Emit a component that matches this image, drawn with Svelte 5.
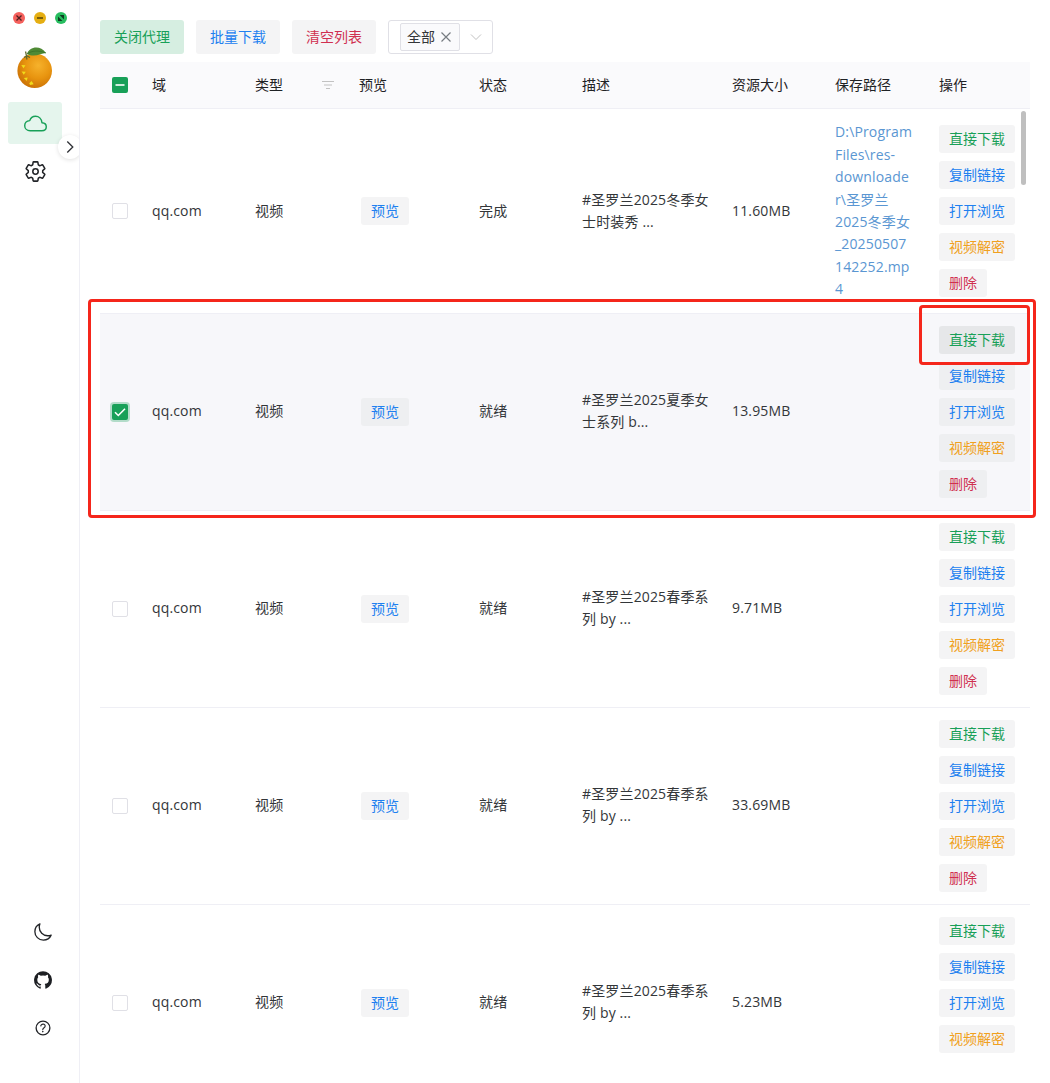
<script lang="ts">
    const actions = [
        {label: "直接下载", type: "success"},
        {label: "复制链接", type: "info"},
        {label: "打开浏览", type: "info"},
        {label: "视频解密", type: "warning"},
        {label: "删除", type: "error"},
    ];

    const columns = ["域", "类型", "预览", "状态", "描述", "资源大小", "保存路径", "操作"];

    const rows = [
        {
            domain: "qq.com", kind: "视频", status: "完成", size: "11.60MB", checked: false, actions,
            desc: ["#圣罗兰2025冬季女", "士时装秀 ..."],
            path: ["D:\\Program", "Files\\res-", "downloade", "r\\圣罗兰", "2025冬季女", "_20250507", "142252.mp", "4"],
        },
        {domain: "qq.com", kind: "视频", status: "就绪", size: "13.95MB", checked: true, actions, desc: ["#圣罗兰2025夏季女", "士系列 b..."], path: []},
        {domain: "qq.com", kind: "视频", status: "就绪", size: "9.71MB", checked: false, actions, desc: ["#圣罗兰2025春季系", "列 by ..."], path: []},
        {domain: "qq.com", kind: "视频", status: "就绪", size: "33.69MB", checked: false, actions, desc: ["#圣罗兰2025春季系", "列 by ..."], path: []},
        {domain: "qq.com", kind: "视频", status: "就绪", size: "5.23MB", checked: false, actions: actions.slice(0, 4), desc: ["#圣罗兰2025春季系", "列 by ..."], path: []},
    ];
</script>

<div class="app">
    <aside class="sidebar">
        <div class="window-btns">
            <svg viewBox="0 0 12 12"><circle cx="6" cy="6" r="6" fill="#f4605c"/><path d="M3.5 3.5l5 5M8.5 3.5l-5 5" stroke="#4b2020" stroke-width="1.3"/></svg>
            <svg viewBox="0 0 12 12"><circle cx="6" cy="6" r="6" fill="#e5ae12"/><path d="M3 6h6" stroke="#4d3b08" stroke-width="1.4"/></svg>
            <svg viewBox="0 0 12 12"><circle cx="6" cy="6" r="6" fill="#27bd5f"/><path d="M3 4.600v4.400h4.400zM4.600 3H9v4.400z" fill="#0c3e20"/></svg>
        </div>
        <svg class="logo" viewBox="0 0 36 42">
            <defs>
                <radialGradient id="peel" cx=".6" cy=".35" r=".75">
                    <stop offset="0" stop-color="#f6b22c"/>
                    <stop offset=".5" stop-color="#e8940f"/>
                    <stop offset="1" stop-color="#c46a05"/>
                </radialGradient>
            </defs>
            <circle cx="17.7" cy="23.700" r="17.3" fill="url(#peel)"/>
            <path d="M10 7c2-7 13-9.500 19-1-5 0-11 5-19 1z" fill="#4f8a35"/>
            <path d="M10 7c5-3.500 11-4 19-1" stroke="#356b25" stroke-width=".7" fill="none"/>
            <path d="M8.500 4.500c.8 2 .8 5 1.500 8M7 10.500l3-1.500 3 1.500" stroke="#5f6a2c" stroke-width="1.300" fill="none"/>
            <g fill="#f0dc1a">
                <path d="M4.300 18l4.200.2-2 3z"/>
                <path d="M4.600 24.500l4.200.2-2 3z"/>
                <path d="M6.800 31l3.900-.6-1 3.700z"/>
                <path d="M12.200 36.500l2.300-2.600 2.200 3.300-3.500.8z"/>
            </g>
        </svg>
        <nav>
            <div class="item active">
                <svg viewBox="0 0 512 512" fill="none" stroke="#18a058" stroke-width="32" stroke-linejoin="round"><path d="M400 240c-8.890-89.540-71-144-144-144-69 0-113.440 48.200-128 96-60 6-112 43.590-112 112 0 66 54 112 120 112h260c55 0 100-27.440 100-88 0-59.820-53-85.760-96-88z"/></svg>
            </div>
            <div class="item">
                <svg viewBox="0 0 512 512" fill="none" stroke="#222428" stroke-width="34" stroke-linejoin="round"><circle cx="256" cy="256" r="60"/><path d="M416.390 256a154.340 154.340 0 0 1-1.530 20.790l45.210 35.460a10.810 10.810 0 0 1 2.450 13.750l-42.770 74a10.810 10.810 0 0 1-13.140 4.590l-44.900-18.080a16.110 16.110 0 0 0-15.170 1.750A164.480 164.480 0 0 1 325 400.800a15.940 15.940 0 0 0-8.820 12.140l-6.730 47.890a11.080 11.080 0 0 1-10.680 9.170h-85.540a11.110 11.110 0 0 1-10.690-8.870l-6.720-47.820a16.070 16.070 0 0 0-9-12.220 155.300 155.300 0 0 1-21.460-12.570 16 16 0 0 0-15.110-1.710l-44.890 18.070a10.810 10.810 0 0 1-13.140-4.580l-42.770-74a10.800 10.800 0 0 1 2.450-13.750l38.210-30a16.050 16.050 0 0 0 6-14.080c-.36-4.170-.58-8.330-.58-12.500s.21-8.270.58-12.350a16 16 0 0 0-6.070-13.940l-38.190-30A10.810 10.810 0 0 1 49.480 186l42.770-74a10.810 10.810 0 0 1 13.140-4.590l44.900 18.080a16.110 16.110 0 0 0 15.170-1.750A164.480 164.480 0 0 1 187 111.200a15.940 15.940 0 0 0 8.820-12.140l6.730-47.890A11.080 11.080 0 0 1 213.230 42h85.540a11.110 11.110 0 0 1 10.690 8.870l6.720 47.820a16.070 16.070 0 0 0 9 12.220 155.300 155.300 0 0 1 21.460 12.570 16 16 0 0 0 15.110 1.710l44.890-18.070a10.810 10.810 0 0 1 13.140 4.580l42.770 74a10.800 10.800 0 0 1-2.450 13.750l-38.210 30a16.050 16.050 0 0 0-6.050 14.080c.33 4.140.55 8.300.55 12.470z"/></svg>
            </div>
        </nav>
        <div class="toggle">
            <svg viewBox="0 0 16 16" fill="none" stroke="#2f3136" stroke-width="1.3"><path d="M5.300 2.500 10.800 8l-5.500 5.500"/></svg>
        </div>
        <div class="footer">
            <svg viewBox="0 0 512 512" fill="none" stroke="#222428" stroke-width="34" stroke-linejoin="round"><path d="M160 136c0-30.620 4.510-61.610 16-88C99.570 81.270 48 159.320 48 248c0 119.290 96.710 216 216 216 88.680 0 166.730-51.570 200-128-26.390 11.490-57.380 16-88 16-119.290 0-216-96.710-216-216z"/></svg>
            <svg viewBox="0 0 20 20"><path fill="#1d1f23" d="M10 1.200a9 9 0 0 0-2.900 17.500c.500.100.600-.200.600-.400v-1.700c-2.500.500-3-1.100-3-1.100-.400-1-1-1.300-1-1.300-.800-.600.100-.600.100-.6.900.100 1.400.900 1.400.9.800 1.400 2.100 1 2.600.8.100-.6.300-1 .6-1.200-2-.2-4.100-1-4.100-4.500 0-1 .4-1.800.9-2.400-.1-.2-.4-1.100.1-2.400 0 0 .8-.2 2.500.9a8.600 8.600 0 0 1 4.500 0c1.700-1.100 2.500-.9 2.500-.9.500 1.300.2 2.200.1 2.400.6.600.9 1.400.9 2.400 0 3.500-2.100 4.200-4.100 4.500.3.300.6.800.6 1.700v2.500c0 .2.200.5.600.4A9 9 0 0 0 10 1.200z"/></svg>
            <svg viewBox="0 0 512 512" fill="none" stroke="#222428" stroke-linecap="round"><circle cx="256" cy="256" r="176" stroke-width="34"/><path stroke-width="30" d="M200 202.290s.84-17.500 19.570-32.570C230.680 160.770 244 158.180 256 158c10.930-.14 20.690 1.670 26.530 4.450 10 4.760 29.470 16.380 29.470 41.090 0 26-17 37.810-36.370 50.800S251 281.430 251 296"/><circle cx="250" cy="348" r="20" fill="#222428" stroke="none"/></svg>
        </div>
    </aside>

    <main>
        <div class="toolbar">
            <button class="btn success on">关闭代理</button>
            <button class="btn info">批量下载</button>
            <button class="btn error">清空列表</button>
            <div class="select">
                <span class="tag">全部<svg viewBox="0 0 12 12"><path d="M1.500 1.500l9 9M10.500 1.500l-9 9"/></svg></span>
                <svg class="arrow" viewBox="0 0 12 12"><path d="M1 3.500l5 5 5-5"/></svg>
            </div>
        </div>

        <div class="table">
            <div class="row head">
                <div class="cell check"><span class="box full"><svg viewBox="0 0 16 16"><path d="M3.500 8h9"/></svg></span></div>
                {#each columns as column}
                    <div class="cell">
                        {column}
                        {#if column === "类型"}
                            <svg class="filter" viewBox="0 0 12 10"><path d="M0 1.500h12M2 5h8M4 8.500h4"/></svg>
                        {/if}
                    </div>
                {/each}
            </div>
            <div class="body">
                {#each rows as row}
                    <div class="row" class:selected={row.checked}>
                        <div class="cell check">
                            <span class="box" class:full={row.checked} class:focus={row.checked}>
                                {#if row.checked}
                                    <svg viewBox="0 0 16 16"><path d="M3 8.300l3.300 3.200L13 4.800"/></svg>
                                {/if}
                            </span>
                        </div>
                        <div class="cell text">{row.domain}</div>
                        <div class="cell text">{row.kind}</div>
                        <div class="cell preview"><button class="btn small info">预览</button></div>
                        <div class="cell text">{row.status}</div>
                        <div class="cell text lines">
                            {#each row.desc as line}<span>{line}</span>{/each}
                        </div>
                        <div class="cell text">{row.size}</div>
                        <div class="cell text lines path">
                            {#each row.path as line}<span>{line}</span>{/each}
                        </div>
                        <div class="cell actions">
                            {#each row.actions as action, i}
                                <button class="btn small {action.type}" class:pressed={row.checked && i === 0}>{action.label}</button>
                            {/each}
                        </div>
                    </div>
                {/each}
                <div class="scrollbar"></div>
            </div>
        </div>
    </main>

    <div class="mark mark-row"></div>
    <div class="mark mark-btn"></div>
</div>

<style>
    :global(body) {
        background: #fff;
        overflow: hidden;
    }
    .app {
        position: relative;
        display: flex;
        width: 1050px;
        height: 1083px;
        overflow: hidden;
        font-family: "Open Sans", "Noto Sans CJK SC", sans-serif;
        font-size: 14px;
        line-height: 22.4px;
        color: #333639;
    }
    svg {
        display: block;
        flex: none;
    }

    /* Sidebar */
    .sidebar {
        position: relative;
        box-sizing: border-box;
        width: 80px;
        display: flex;
        flex-direction: column;
        border-right: 1px solid #efeff5;
    }
    .window-btns {
        display: flex;
        gap: 9px;
        padding: 12px 0 0 13px;
    }
    .window-btns svg {
        width: 12px;
        height: 12px;
    }
    .logo {
        width: 36px;
        height: 42px;
        margin: 23px 0 0 17px;
    }
    nav {
        padding: 13px 0 0 8px;
        display: flex;
        flex-direction: column;
        gap: 6px;
    }
    .item {
        width: 54px;
        height: 42px;
        border-radius: 3px;
        display: flex;
        align-items: center;
        justify-content: center;
    }
    .item svg {
        width: 23px;
        height: 23px;
    }
    .item.active {
        background: #e5f5ed;
    }
    .toggle {
        position: absolute;
        left: 58px;
        top: 135px;
        width: 24px;
        height: 24px;
        border-radius: 50%;
        background: #fff;
        box-shadow: 0 1px 4px rgba(0, 0, 0, .12);
        display: flex;
        align-items: center;
        justify-content: center;
        clip-path: inset(-6px 3px -6px -6px);
    }
    .toggle svg {
        width: 16px;
        height: 16px;
    }
    .footer {
        margin-top: auto;
        padding: 0 0 45px 33px;
        display: flex;
        flex-direction: column;
        gap: 28px;
    }
    .footer svg {
        width: 20px;
        height: 20px;
    }

    /* Toolbar */
    main {
        width: 930px;
        padding: 20px;
    }
    .toolbar {
        display: flex;
        gap: 12px;
        height: 34px;
    }
    .btn {
        font: inherit;
        height: 34px;
        padding: 0 14px;
        border: 0;
        border-radius: 3px;
        background: #f4f4f5;
        display: flex;
        align-items: center;
        white-space: nowrap;
    }
    .btn.small {
        height: 28px;
        padding: 0 10px;
    }
    .success {
        color: #18a058;
    }
    .info {
        color: #2080f0;
    }
    .warning {
        color: #f0a020;
    }
    .error {
        color: #d03050;
    }
    .btn.on {
        background: #d6eee1;
    }
    .select {
        box-sizing: border-box;
        width: 105px;
        border: 1px solid #e0e0e6;
        border-radius: 3px;
        display: flex;
        align-items: center;
        padding-left: 11px;
    }
    .tag {
        box-sizing: border-box;
        width: 60px;
        height: 28px;
        padding-left: 6px;
        border: 1px solid #e0e0e6;
        border-radius: 2px;
        background: #fafafc;
        display: flex;
        align-items: center;
        gap: 5px;
    }
    .tag svg {
        width: 12px;
        height: 12px;
        stroke: #767c82;
        stroke-width: 1.200;
    }
    .arrow {
        width: 12px;
        height: 12px;
        margin-left: 10px;
        fill: none;
        stroke: #c2c2c2;
    }

    /* Table */
    .table {
        margin-top: 8px;
    }
    .row {
        box-sizing: border-box;
        display: grid;
        grid-template-columns: 40px 103px 104px 120px 103px 150px 103px 104px 103px;
        border-bottom: 1px solid #efeff5;
    }
    .cell {
        display: flex;
        align-items: center;
        padding: 12px 0 12px 12px;
    }
    .head {
        height: 47px;
        background: #fafafc;
        color: #1f2225;
    }
    .filter {
        width: 12px;
        height: 10px;
        margin-left: auto;
        margin-right: 13px;
        stroke: #c2c2c2;
    }
    .body {
        position: relative;
        height: 951px;
        overflow: hidden;
    }
    .body .row {
        height: 197px;
    }
    .body .row:first-child {
        height: 205px;
    }
    .text {
        letter-spacing: .15px;
    }
    .row:not(:first-child) .text {
        padding-bottom: 14px;
    }
    .row.selected {
        background: #f7f7fa;
    }
    .box {
        box-sizing: border-box;
        width: 16px;
        height: 16px;
        border: 1px solid #e0e0e6;
        border-radius: 2px;
        background: #fff;
    }
    .box.full {
        border: 0;
        background: #18a058;
    }
    .box.focus {
        box-shadow: 0 0 0 2px rgba(24, 160, 88, .3);
    }
    .box svg {
        width: 16px;
        height: 16px;
        fill: none;
        stroke: #fff;
        stroke-width: 1.600;
    }
    .preview {
        padding-left: 14px;
    }
    .lines {
        flex-direction: column;
        align-items: flex-start;
        justify-content: center;
        white-space: nowrap;
    }
    .path {
        color: #5a96d2;
    }
    .actions {
        flex-direction: column;
        align-items: flex-start;
        gap: 8px;
    }
    .row:first-child .actions {
        justify-content: center;
    }
    .selected .btn {
        background: #eeeff1;
    }
    .selected .btn.pressed {
        background: #e6e7e9;
    }
    .scrollbar {
        position: absolute;
        top: 2px;
        right: 4px;
        width: 5px;
        height: 74px;
        border-radius: 3px;
        background: #bfbfbf;
    }

    /* Highlight frames */
    .mark {
        position: absolute;
        box-sizing: border-box;
        border: 3px solid #f5261b;
        border-radius: 4px;
    }
    .mark-row {
        left: 88px;
        top: 299px;
        width: 948px;
        height: 219px;
    }
    .mark-btn {
        left: 919px;
        top: 305px;
        width: 111px;
        height: 60px;
    }
</style>
